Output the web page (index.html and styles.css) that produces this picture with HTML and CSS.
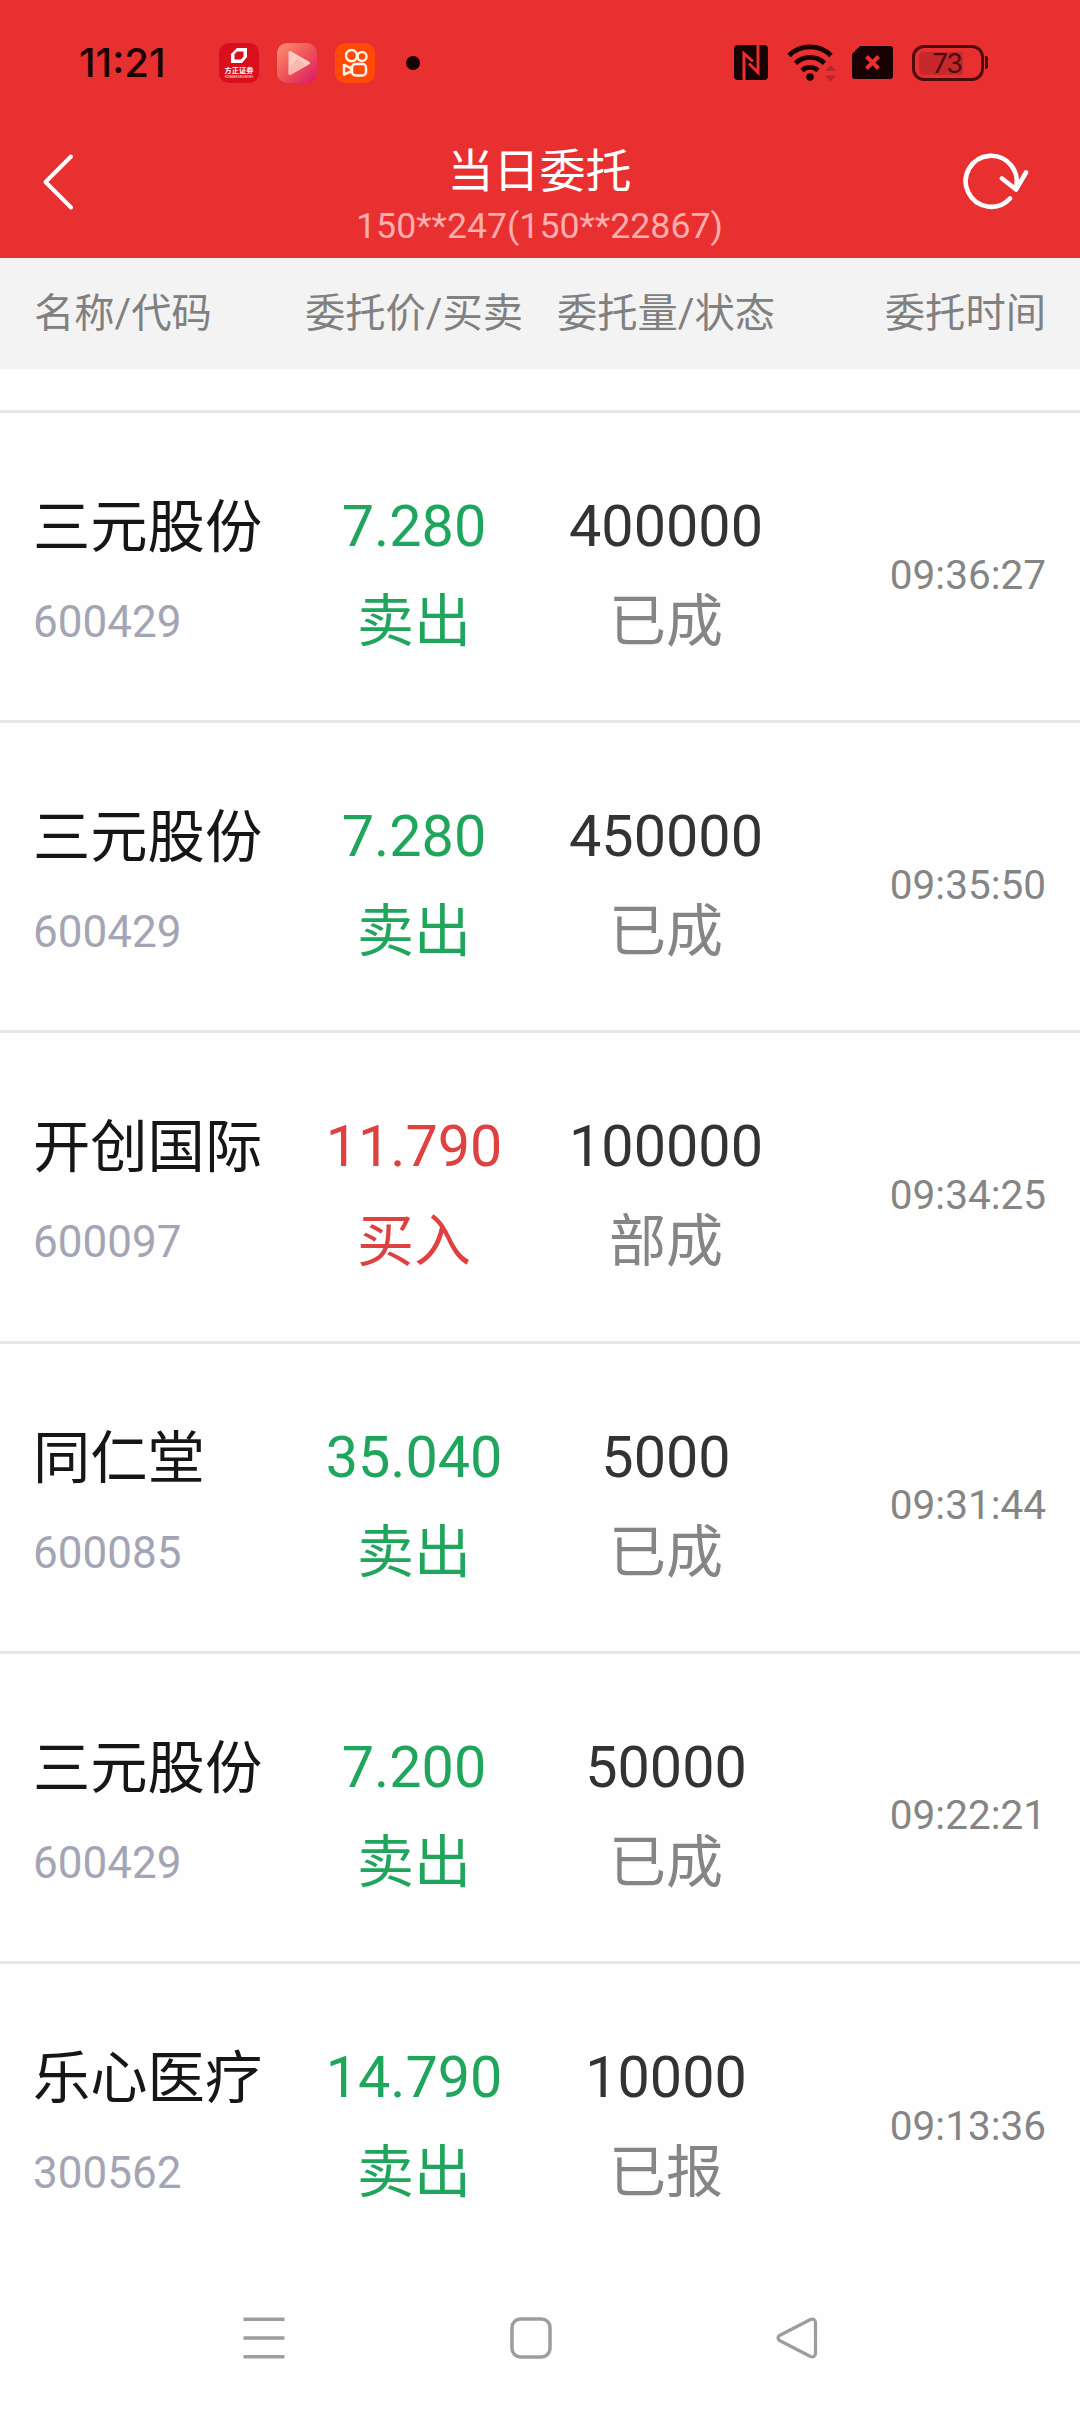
FILE: index.html
```html
<!DOCTYPE html>
<html lang="zh-CN">
<head>
<meta charset="utf-8">
<title>当日委托</title>
<link rel="stylesheet" href="styles.css">
</head>
<body>
<div class="screen">
  <div class="status-bar">
    <span class="clock">11:21</span>
    <div class="notifications">
      <div class="app-icon broker">
        <svg width="40" height="22" viewBox="0 0 40 22"><path d="M18 5h10v9l-5 6H12v-9z" fill="#fff"/><path d="M18 8.500h6.500v5.500l-3 2.500h-6v-5z" fill="#d90f1c"/></svg>
        <span class="broker-name">方正证券</span>
        <span class="broker-sub">FOUNDER SECURITIES</span>
      </div>
      <svg width="40" height="40" viewBox="0 0 40 40">
        <defs><linearGradient id="video" x1="0" y1="0" x2="1" y2="1"><stop offset="0" stop-color="#fb9270"/><stop offset=".5" stop-color="#ee5558"/><stop offset="1" stop-color="#db1768"/></linearGradient></defs>
        <rect width="40" height="40" rx="10" fill="url(#video)"/>
        <path d="M13 9.500v21l18.500-10.500z" fill="#fccbc2" stroke="#fccbc2" stroke-width="3" stroke-linejoin="round"/>
        <path d="M11.500 25l9-9.500 8 6.500-15.500 9.500-1.500-1z" fill="#f9aaa0" opacity=".6"/>
      </svg>
      <svg width="40" height="40" viewBox="0 0 40 40">
        <rect width="40" height="40" rx="10" fill="#ff4906"/>
        <g fill="none" stroke="#fff3e8" stroke-width="2.500" stroke-linejoin="round"><circle cx="16.500" cy="12.700" r="5.600"/><circle cx="27" cy="13.500" r="4.500"/><rect x="17" y="21" width="14" height="11.500" rx="3.500"/><path d="M9 22v9.500l7-3v-3.500z"/></g>
      </svg>
      <span class="more-dot"></span>
    </div>
    <div class="system-icons">
      <svg width="34" height="35" viewBox="0 0 34 35"><rect width="34" height="35" rx="4" fill="#180203"/><path d="M10 35V8.500l9 8M24 0v27.500l-9-9" fill="none" stroke="#e83030" stroke-width="3"/></svg>
      <svg class="wifi" width="50" height="39" viewBox="0 0 50 39"><g fill="none" stroke="#180203" stroke-width="4.800"><path d="M2 12.500a30 30 0 0 1 42 0"/><path d="M8.500 20.200a21 21 0 0 1 29 0"/><path d="M15 27.500a12 12 0 0 1 16 0"/></g><circle cx="23" cy="34" r="3.800" fill="#180203"/><path d="M38 28l5.500-6 5.500 6zM38 32.500h11L43.500 38.500z" fill="#b9252a"/></svg>
      <svg width="41" height="33" viewBox="0 0 41 33"><path d="M8 0h30a3 3 0 0 1 3 3v27a3 3 0 0 1-3 3H3a3 3 0 0 1-3-3V8z" fill="#180203"/><path d="M14.500 10.500l12 12m0-12l-12 12" stroke="#e83030" stroke-width="4"/></svg>
      <div class="battery"><span class="battery-level">73</span></div>
      <span class="battery-tip"></span>
    </div>
  </div>
  <header class="nav-header">
    <svg class="back" width="40" height="60" viewBox="0 0 40 60"><path d="M31 4.500L5.500 30 31 55.500" fill="none" stroke="#fff" stroke-width="4" stroke-linecap="round" stroke-linejoin="round"/></svg>
    <div class="titles">
      <h1 class="title">当日委托</h1>
      <div class="account">150**247(150**22867)</div>
    </div>
    <svg class="refresh" width="68" height="60" viewBox="0 0 68 60"><path d="M47 46.500A25.500 25.500 0 1 1 52.500 37M39 26.500l14 11 10-17" fill="none" stroke="#fff" stroke-width="4.600" stroke-linecap="round" stroke-linejoin="round"/></svg>
  </header>
  <div class="grid columns">
    <span>名称/代码</span><span class="center">委托价/买卖</span><span class="center">委托量/状态</span><span class="right">委托时间</span>
  </div>
  <main class="orders">
    <div class="previous-row"></div>
    <section class="grid order sell"><div><div class="name">三元股份</div><div class="code">600429</div></div><div class="center deal"><div>7.280</div><div class="word">卖出</div></div><div class="center amount"><div>400000</div><div class="word state">已成</div></div><time class="right">09:36:27</time></section>
    <section class="grid order sell"><div><div class="name">三元股份</div><div class="code">600429</div></div><div class="center deal"><div>7.280</div><div class="word">卖出</div></div><div class="center amount"><div>450000</div><div class="word state">已成</div></div><time class="right">09:35:50</time></section>
    <section class="grid order buy"><div><div class="name">开创国际</div><div class="code">600097</div></div><div class="center deal"><div>11.790</div><div class="word">买入</div></div><div class="center amount"><div>100000</div><div class="word state">部成</div></div><time class="right">09:34:25</time></section>
    <section class="grid order sell"><div><div class="name">同仁堂</div><div class="code">600085</div></div><div class="center deal"><div>35.040</div><div class="word">卖出</div></div><div class="center amount"><div>5000</div><div class="word state">已成</div></div><time class="right">09:31:44</time></section>
    <section class="grid order sell"><div><div class="name">三元股份</div><div class="code">600429</div></div><div class="center deal"><div>7.200</div><div class="word">卖出</div></div><div class="center amount"><div>50000</div><div class="word state">已成</div></div><time class="right">09:22:21</time></section>
    <section class="grid order sell"><div><div class="name">乐心医疗</div><div class="code">300562</div></div><div class="center deal"><div>14.790</div><div class="word">卖出</div></div><div class="center amount"><div>10000</div><div class="word state">已报</div></div><time class="right">09:13:36</time></section>
  </main>
  <nav class="system-nav">
    <svg width="42" height="42" viewBox="0 0 42 42"><path d="M.5 2.300h41M.5 21h41M.5 39.700h41" stroke="#9c9d9d" stroke-width="3.500"/></svg>
    <svg width="42" height="42" viewBox="0 0 42 42"><rect x="2" y="2" width="38" height="38" rx="8.500" fill="none" stroke="#9c9d9d" stroke-width="3.500"/></svg>
    <svg width="42" height="42" viewBox="0 0 42 42"><path d="M3.500 18.500L34.500 2.500q4.500-1.500 5 3v31q-.5 4.500-5 3L3.500 23.500q-3-2.500 0-5z" fill="none" stroke="#9c9d9d" stroke-width="3.200" stroke-linejoin="round"/></svg>
  </nav>
</div>
</body>
</html>
```
FILE: styles.css
```css
* { box-sizing: border-box; }
body { margin: 0; background: #fefefe; font-family: Roboto, "Noto Sans CJK SC", sans-serif; }
svg { display: block; flex: none; }
.screen { width: 1080px; height: 2412px; display: flex; flex-direction: column; overflow: hidden; }

.status-bar { height: 125px; padding-left: 79px; display: flex; align-items: center; background: #e83030; flex: none; }
.clock { width: 140px; font: 500 40px/40px Inter, sans-serif; letter-spacing: 0; color: #180203; }
.notifications { width: 515px; display: flex; align-items: center; gap: 18px; }
.app-icon { width: 40px; height: 40px; border-radius: 10px; display: flex; flex-direction: column; align-items: center; overflow: hidden; }
.broker { background: #d90f1c; color: #fff; }
.broker-name { font-size: 7.200px; line-height: 10px; font-weight: 700; margin-top: 1px; white-space: nowrap; }
.broker-sub { font-size: 2.800px; line-height: 3px; white-space: nowrap; }
.more-dot { width: 14px; height: 14px; border-radius: 50%; background: #180203; margin-left: 13px; }
.system-icons { display: flex; align-items: center; color: #4d0b0d; }
.wifi { margin: 0 15px 0 19px; }
.battery { width: 72px; height: 36px; margin-left: 19px; padding: 4px; border: 3px solid #4d0b0d; border-radius: 12px; }
.battery-level { display: block; width: 44px; height: 23px; padding-right: 1px; border-radius: 4px 0 0 4px; background: #c7282b; font: 400 27px/24px Inter, sans-serif; letter-spacing: -1px; text-align: right; }
.battery-tip { width: 3px; height: 13px; margin-left: 1px; border-radius: 0 2px 2px 0; background: #4d0b0d; }

.nav-header { height: 133px; padding: 0 49px 0 40px; display: grid; grid-template-columns: 68px 1fr 68px; align-items: start; background: #e83030; color: #fff; flex: none; }
.back, .refresh { margin-top: 27px; }
.titles { padding: 16px 0 0 8px; text-align: center; }
.title { margin: 0; font-size: 46px; line-height: 60px; font-weight: 400; }
.account { margin-top: 7px; font-size: 35.700px; line-height: 36px; color: #ffadad; }

.grid { display: grid; grid-template-columns: 254px 252px 252px 1fr; padding: 0 34px; }
.center { text-align: center; }
.right { text-align: right; }
.columns { height: 111px; align-items: center; background: #f3f3f3; color: #808080; font-size: 40.300px; line-height: 44px; padding-top: 1px; flex: none; }
.previous-row { height: 44px; border-bottom: 3px solid #e7e7e7; }
.order { height: 310.200px; padding-top: 76px; padding-bottom: 60px; align-items: center; border-bottom: 3px solid #e7e7e7; font-size: 57.500px; line-height: 76px; }
.order:last-child { border-bottom-color: transparent; }
.name { padding-top: 1px; margin: 0 0 -1px -1px; font-size: 57.300px; color: #161616; }
.code { margin: 19px 0 0 -1px; font-size: 44px; color: #a4a5b4; }
.word { margin-top: 19px; font-size: 57px; }
.amount { color: #333; }
.state { color: #858585; }
.sell .deal { color: #20a65c; }
.buy .deal { color: #df4040; }
time { font-size: 40.500px; color: #858585; }

.system-nav { flex: 1; display: flex; justify-content: space-between; align-items: flex-start; padding: 43px 262px 0 243px; }
```
